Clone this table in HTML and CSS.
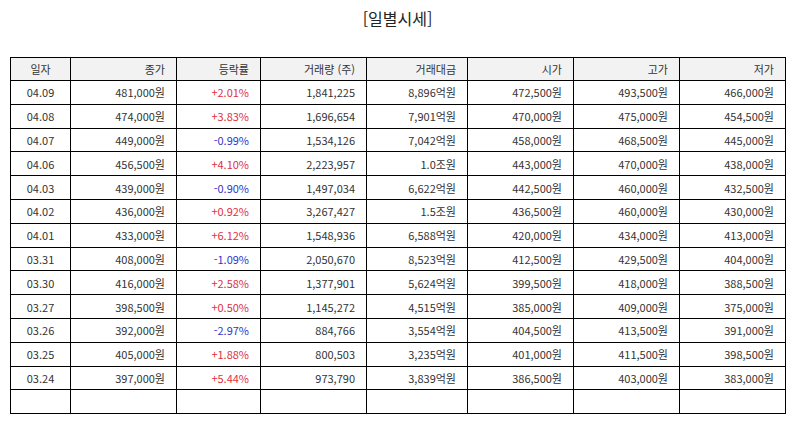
FILE: index.html
```html
<!DOCTYPE html>
<html lang="ko">
<head>
<meta charset="utf-8">
<link rel="stylesheet" href="styles.css">
</head>
<body>
<div class="page">
  <h1 class="title">[일별시세]</h1>
  <table class="prices">
    <colgroup>
      <col class="c-date"><col class="c-close"><col class="c-rate"><col class="c-vol"><col class="c-amt"><col class="c-open"><col class="c-high"><col class="c-low">
    </colgroup>
    <thead>
      <tr><th class="center">일자</th><th>종가</th><th>등락률</th><th>거래량 (주)</th><th>거래대금</th><th>시가</th><th>고가</th><th>저가</th></tr>
    </thead>
    <tbody>
      <tr><td class="center">04.09</td><td>481,000원</td><td class="up">+2.01%</td><td>1,841,225</td><td>8,896억원</td><td>472,500원</td><td>493,500원</td><td>466,000원</td></tr>
      <tr><td class="center">04.08</td><td>474,000원</td><td class="up">+3.83%</td><td>1,696,654</td><td>7,901억원</td><td>470,000원</td><td>475,000원</td><td>454,500원</td></tr>
      <tr><td class="center">04.07</td><td>449,000원</td><td class="down">-0.99%</td><td>1,534,126</td><td>7,042억원</td><td>458,000원</td><td>468,500원</td><td>445,000원</td></tr>
      <tr><td class="center">04.06</td><td>456,500원</td><td class="up">+4.10%</td><td>2,223,957</td><td>1.0조원</td><td>443,000원</td><td>470,000원</td><td>438,000원</td></tr>
      <tr><td class="center">04.03</td><td>439,000원</td><td class="down">-0.90%</td><td>1,497,034</td><td>6,622억원</td><td>442,500원</td><td>460,000원</td><td>432,500원</td></tr>
      <tr><td class="center">04.02</td><td>436,000원</td><td class="up">+0.92%</td><td>3,267,427</td><td>1.5조원</td><td>436,500원</td><td>460,000원</td><td>430,000원</td></tr>
      <tr><td class="center">04.01</td><td>433,000원</td><td class="up">+6.12%</td><td>1,548,936</td><td>6,588억원</td><td>420,000원</td><td>434,000원</td><td>413,000원</td></tr>
      <tr><td class="center">03.31</td><td>408,000원</td><td class="down">-1.09%</td><td>2,050,670</td><td>8,523억원</td><td>412,500원</td><td>429,500원</td><td>404,000원</td></tr>
      <tr><td class="center">03.30</td><td>416,000원</td><td class="up">+2.58%</td><td>1,377,901</td><td>5,624억원</td><td>399,500원</td><td>418,000원</td><td>388,500원</td></tr>
      <tr><td class="center">03.27</td><td>398,500원</td><td class="up">+0.50%</td><td>1,145,272</td><td>4,515억원</td><td>385,000원</td><td>409,000원</td><td>375,000원</td></tr>
      <tr><td class="center">03.26</td><td>392,000원</td><td class="down">-2.97%</td><td>884,766</td><td>3,554억원</td><td>404,500원</td><td>413,500원</td><td>391,000원</td></tr>
      <tr><td class="center">03.25</td><td>405,000원</td><td class="up">+1.88%</td><td>800,503</td><td>3,235억원</td><td>401,000원</td><td>411,500원</td><td>398,500원</td></tr>
      <tr><td class="center">03.24</td><td>397,000원</td><td class="up">+5.44%</td><td>973,790</td><td>3,839억원</td><td>386,500원</td><td>403,000원</td><td>383,000원</td></tr>
      <tr class="blank"><td></td><td></td><td></td><td></td><td></td><td></td><td></td><td></td></tr>
    </tbody>
  </table>
</div>
</body>
</html>
```
FILE: styles.css
```css
html, body {
  margin: 0;
  padding: 0;
  background: #fff;
}
.page {
  padding: 0 9px 0 10px;
  font-family: "Noto Sans CJK KR", "Noto Sans", sans-serif;
  color: #333;
}
.title {
  margin: 0;
  padding-top: 6px;
  height: 57px;
  box-sizing: border-box;
  text-align: center;
  font-size: 16px;
  font-weight: normal;
  line-height: 24px;
  color: #222;
}
.prices {
  width: 775px;
  border-collapse: collapse;
  table-layout: fixed;
  font-size: 11px;
}
.c-date { width: 60px; }
.c-close { width: 106px; }
.c-rate { width: 84px; }
.c-vol { width: 106px; }
.c-amt { width: 101px; }
.c-open { width: 106px; }
.c-high { width: 106px; }
.c-low { width: 106px; }
.prices th, .prices td {
  border: 1px solid #000;
  height: 22.8px;
  padding: 0 11px 0 4px;
  text-align: right;
  font-weight: normal;
  line-height: 14px;
  white-space: nowrap;
}
.prices th {
  background: #f2f2f2;
  height: 22px;
}
.prices .center {
  text-align: center;
  padding: 0;
}
.up { color: #e0303c; }
.down { color: #3434c8; }
```
